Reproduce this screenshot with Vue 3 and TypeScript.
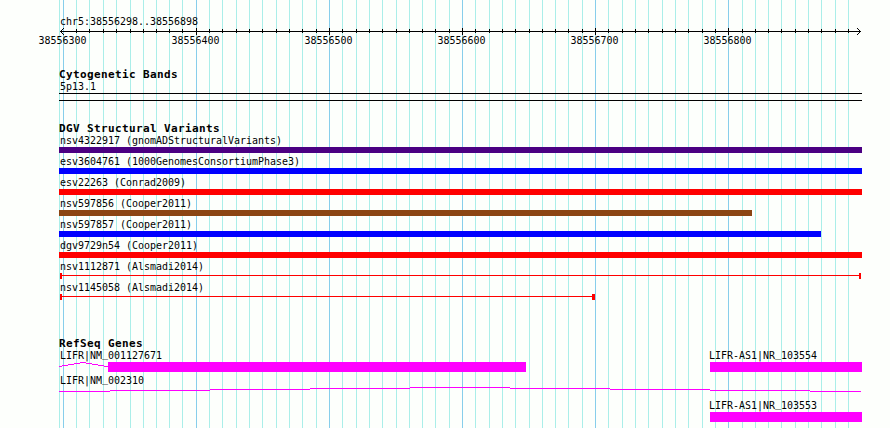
<script setup lang="ts">
interface Box {
  x: number
  width: number
}
interface Feature {
  label: string
  end: number
  color: string
  kind: 'bar' | 'span'
  cap?: number
}
interface Gene {
  label: string
  x: number
  line: string
  box?: Box
}

const left = 59
const majorLines = [63, 196, 329, 462, 595, 728]
const minorLines = [
  59, 76, 89, 103, 116, 130, 143, 156, 169, 182,
  209, 222, 236, 249, 262, 276, 289, 302, 316,
  342, 356, 369, 382, 396, 409, 422, 435, 449,
  475, 489, 502, 515, 529, 542, 555, 568, 582,
  608, 622, 635, 648, 662, 675, 688, 702, 715,
  742, 755, 768, 781, 795, 808, 821, 835, 848,
]
const minorTicks = minorLines.filter((x) => x > left)
const positions = majorLines.map((x, i) => ({ x, label: String(38556300 + i * 100) }))

const variants: Feature[] = [
  { label: 'nsv4322917 (gnomADStructuralVariants)', end: 862, color: '#4b0082', kind: 'bar' },
  { label: 'esv3604761 (1000GenomesConsortiumPhase3)', end: 862, color: '#0000ff', kind: 'bar' },
  { label: 'esv22263 (Conrad2009)', end: 862, color: '#ff0000', kind: 'bar' },
  { label: 'nsv597856 (Cooper2011)', end: 752, color: '#8b4513', kind: 'bar' },
  { label: 'nsv597857 (Cooper2011)', end: 821, color: '#0000ff', kind: 'bar' },
  { label: 'dgv9729n54 (Cooper2011)', end: 862, color: '#ff0000', kind: 'bar' },
  { label: 'nsv1112871 (Alsmadi2014)', end: 861, color: '#ff0000', kind: 'span', cap: 2 },
  { label: 'nsv1145058 (Alsmadi2014)', end: 595, color: '#ff0000', kind: 'span', cap: 3 },
]

const geneRows: Gene[][] = [
  [
    {
      label: 'LIFR|NM_001127671',
      x: 60,
      line: 'M59 18.5H62M62 17.5H68M68 16.5H74M74 15.5H80M80 14.5H86M86 15.5H92M92 16.5H98M98 17.5H104M104 18.5H108',
      box: { x: 108, width: 418 },
    },
    { label: 'LIFR-AS1|NR_103554', x: 709, line: '', box: { x: 710, width: 152 } },
  ],
  [
    {
      label: 'LIFR|NM_002310',
      x: 60,
      line: 'M59 18.5H110M110 17.5H210M210 16.5H310M310 15.5H410M410 14.5H510M510 15.5H610M610 16.5H710M710 17.5H810M810 18.5H861',
    },
  ],
  [{ label: 'LIFR-AS1|NR_103553', x: 709, line: '', box: { x: 710, width: 152 } }],
]

const textWidth = (text: string) => text.length * 6

const underscoreShift = (text: string) => {
  const at = text.indexOf('_')
  return [...text].map((_, i) => (i === at ? -2 : i === at + 1 ? 2 : 0)).join(' ')
}
</script>

<template>
  <main class="browser">
    <svg class="grid" width="890" height="428" aria-hidden="true">
      <rect v-for="x in minorLines" :key="x" class="minor" :x="x" y="0" width="1" height="428" />
      <rect v-for="x in majorLines" :key="x" class="major" :x="x" y="0" width="1" height="428" />
    </svg>

    <header class="ruler">
      <svg width="890" height="36">
        <text class="label" x="60" y="13" textLength="138" lengthAdjust="spacingAndGlyphs">chr5:38556298..38556898</text>
        <rect x="60" y="19" width="801" height="1" />
        <path class="arrow" d="M64 16L60.5 19.5L64 23M857 16L860.5 19.5L857 23" />
        <rect v-for="x in minorTicks" :key="x" :x="x" y="17" width="1" height="4" />
        <rect v-for="x in majorLines.slice(1)" :key="x" :x="x" y="16" width="1" height="7" />
        <text
          v-for="p in positions"
          :key="p.x"
          class="label"
          :x="p.x - 24.5"
          y="32"
          textLength="48"
          lengthAdjust="spacingAndGlyphs"
        >{{ p.label }}</text>
      </svg>
    </header>

    <section class="bands">
      <h2>Cytogenetic Bands</h2>
      <svg width="890" height="22">
        <text class="label" x="60" y="11" textLength="36" lengthAdjust="spacingAndGlyphs">5p13.1</text>
        <rect x="59" y="14" width="803" height="1" />
        <rect x="59" y="21" width="803" height="1" />
      </svg>
    </section>

    <section class="variants">
      <h2>DGV Structural Variants</h2>
      <svg v-for="f in variants" :key="f.label" width="890" height="21">
        <text
          class="label"
          x="60"
          y="11"
          :textLength="textWidth(f.label)"
          lengthAdjust="spacingAndGlyphs"
        >{{ f.label }}</text>
        <rect v-if="f.kind === 'bar'" :x="left" y="14" :width="f.end - left" height="6" :fill="f.color" />
        <g v-else :fill="f.color">
          <rect x="60" y="16" :width="f.end - 60" height="1" />
          <rect x="60" y="14" width="2" height="6" />
          <rect :x="f.end - (f.cap ?? 2)" y="14" :width="f.cap" height="6" />
        </g>
      </svg>
    </section>

    <section class="genes">
      <h2>RefSeq Genes</h2>
      <svg v-for="(row, i) in geneRows" :key="i" width="890" height="25">
        <g v-for="g in row" :key="g.label">
          <text
            class="label"
            :x="g.x"
            y="11"
            :dy="underscoreShift(g.label)"
            :textLength="textWidth(g.label)"
            lengthAdjust="spacingAndGlyphs"
          >{{ g.label }}</text>
          <path v-if="g.line" class="intron" :d="g.line" />
          <rect v-if="g.box" class="exon" :x="g.box.x" y="14" :width="g.box.width" height="10" />
        </g>
      </svg>
    </section>
  </main>
</template>

<style>
body {
  margin: 0;
  background: #fdfffc;
}
</style>

<style scoped>
.browser {
  position: relative;
  width: 890px;
  height: 428px;
  overflow: hidden;
  font-family: "DejaVu Sans Mono", monospace;
  color: #000;
}
.grid {
  position: absolute;
  inset: 0;
}
svg {
  display: block;
  shape-rendering: crispEdges;
}
.minor {
  fill: #aaeee9;
}
.major {
  fill: #87ceeb;
}
.ruler,
section {
  position: relative;
}
.ruler {
  padding-top: 12px;
  height: 56px;
}
.bands {
  height: 54px;
}
.variants {
  height: 215px;
}
h2 {
  margin: 0;
  padding-left: 59px;
  height: 11px;
  font-size: 11px;
  font-weight: 700;
  line-height: 13px;
  letter-spacing: 0.378px;
}
.label {
  font-size: 11px;
  white-space: pre;
}
.arrow,
.intron {
  fill: none;
  stroke-width: 1;
}
.arrow {
  stroke: #000;
  shape-rendering: auto;
}
.intron {
  stroke: #f0f;
}
.exon {
  fill: #f0f;
}
</style>
